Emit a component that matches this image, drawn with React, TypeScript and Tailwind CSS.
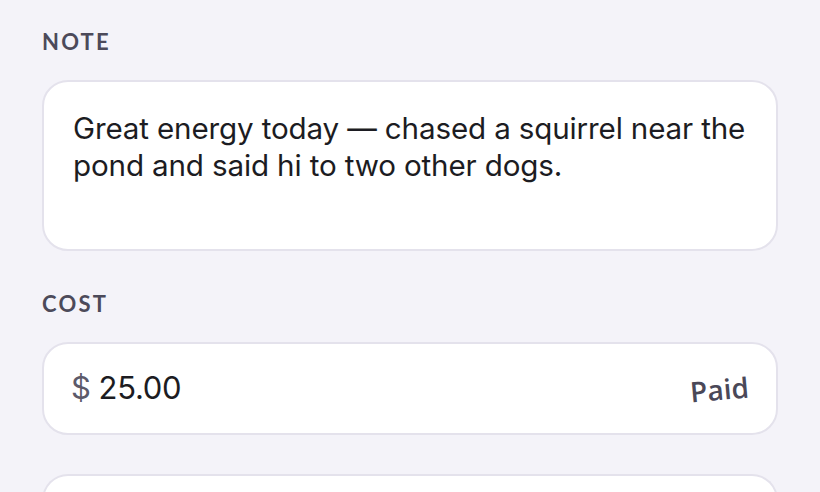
export default function App() {
  return (
    <div className="h-[492px] w-[820px] overflow-hidden bg-[#f4f3f9] px-[42px] pt-[30px]">
      {/* Note */}
      <p className="font-['Lato',sans-serif] text-[22px] font-bold leading-[24px] tracking-[0.1em] text-[#4c4a5a]">NOTE</p>
      <div className="mt-[26px] h-[171px] rounded-[26px] border-2 border-[#e4e2ec] bg-white pl-[29px] pr-[20px] pt-[28px]">
        <p className="font-['Inter',sans-serif] text-[29.6px] leading-[37px] tracking-[-0.005em] text-[#1c1c22]">
          Great energy today — chased a squirrel near the pond and said hi to two other dogs.
        </p>
      </div>

      {/* Cost */}
      <p className="mt-[41px] font-['Lato',sans-serif] text-[22px] font-bold leading-[24px] tracking-[0.1em] text-[#4c4a5a]">COST</p>
      <div className="mt-[26px] flex h-[93px] items-center justify-between rounded-[26px] border-2 border-[#e4e2ec] bg-white pl-[27px] pr-[27px]">
        <div className="flex items-baseline gap-[8px] font-['Inter',sans-serif] text-[31px] tracking-[-0.01em]">
          <span className="text-[#5c5a6a]">$</span>
          <span className="text-[#1c1c22]">25.00</span>
        </div>
        <span className="-rotate-[5deg] font-['Open_Sans',sans-serif] text-[28px] font-semibold text-[#4a4858]">Paid</span>
      </div>

      <div className="mt-[39px] h-[60px] rounded-t-[26px] border-2 border-b-0 border-[#e4e2ec] bg-white" />
    </div>
  );
}
